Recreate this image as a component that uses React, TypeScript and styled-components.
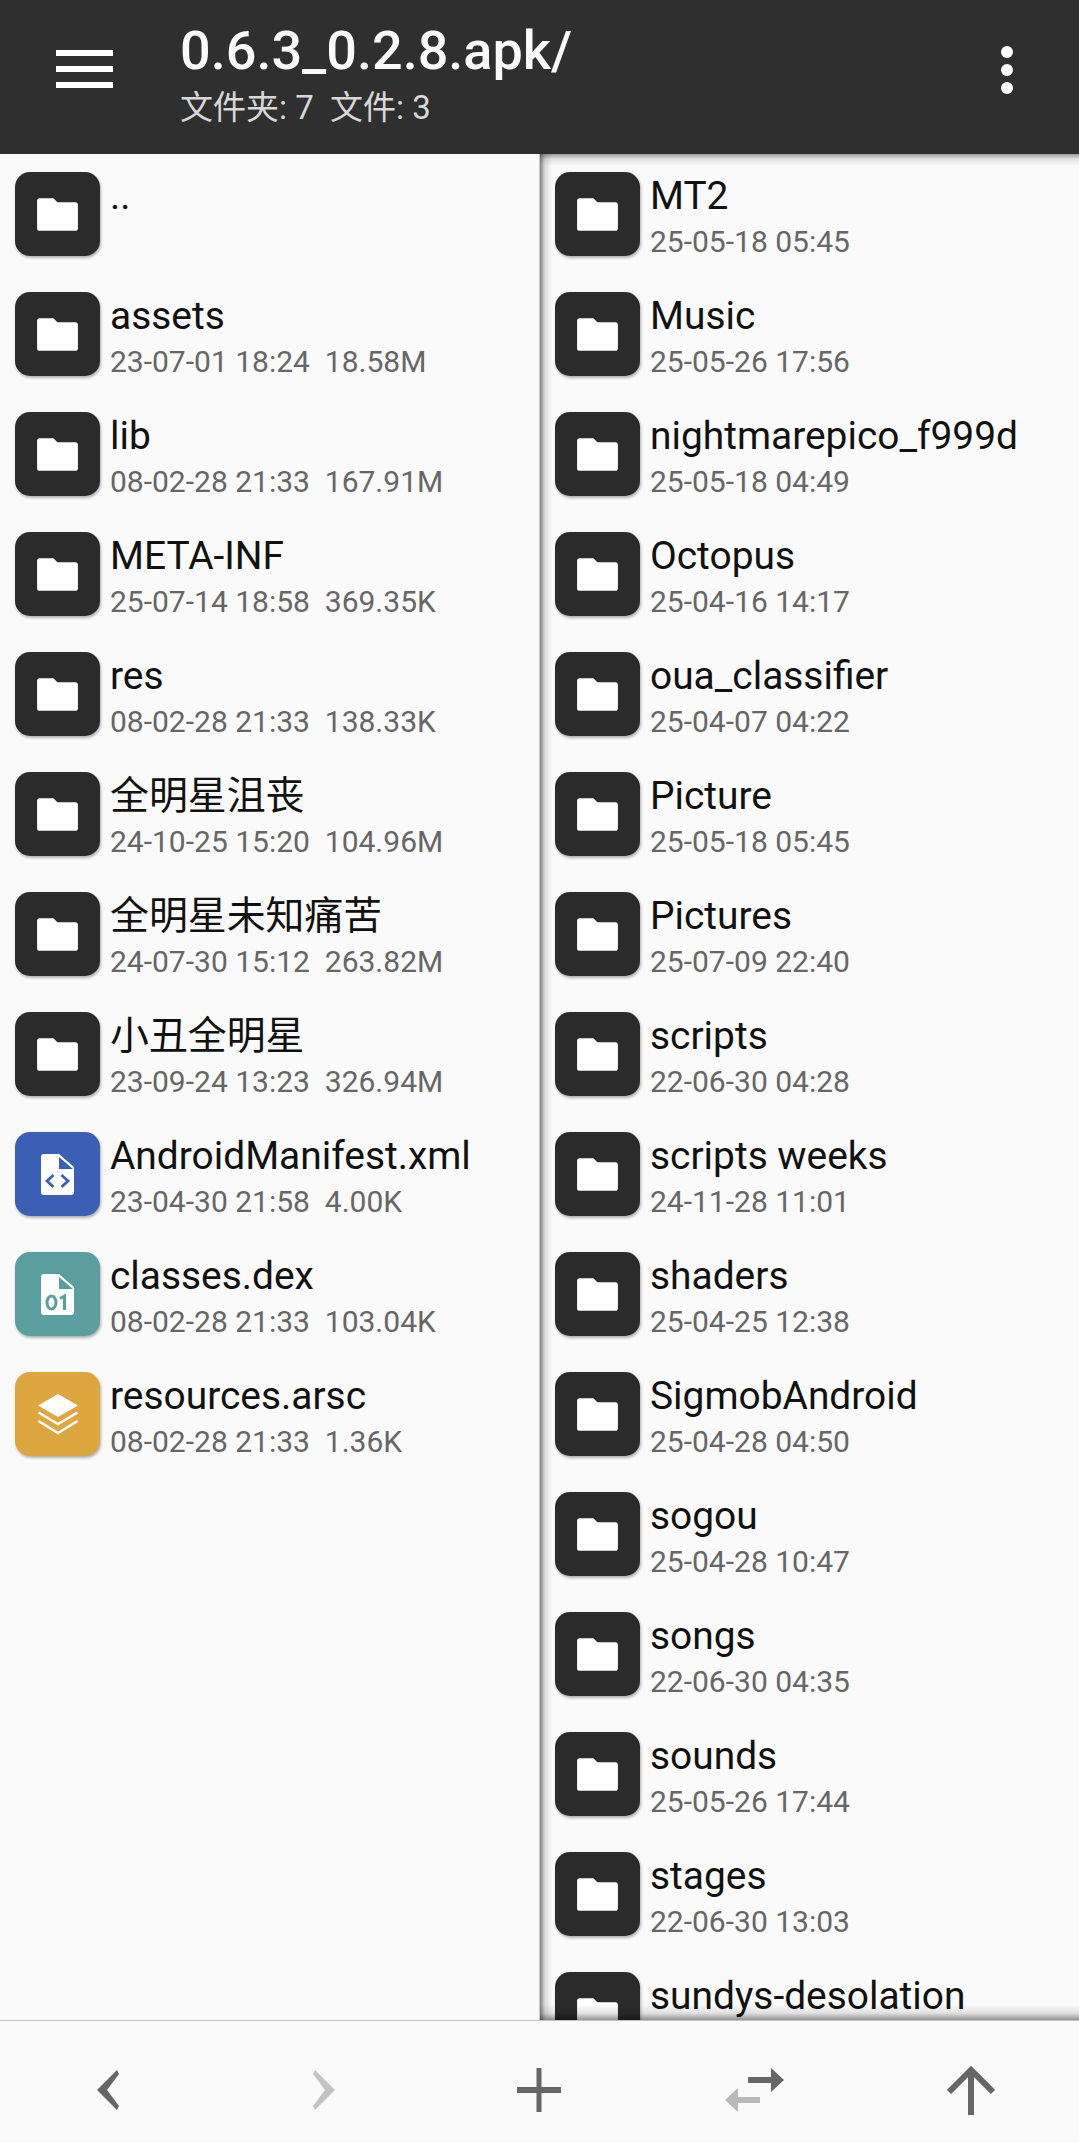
import React from "react";
import styled, { createGlobalStyle } from "styled-components";

const Global = createGlobalStyle`
  html, body { margin: 0; padding: 0; background: #fafafa; }
  body { font-family: Roboto, "Noto Sans CJK SC", sans-serif; }
  * { box-sizing: border-box; }
`;

const Page = styled.div`
  width: 1079px;
  height: 2143px;
  display: flex;
  flex-direction: column;
  overflow: hidden;
  background: #fafafa;
`;

const Header = styled.header`
  flex: 0 0 154px;
  background: #2f2f2f;
  display: flex;
  align-items: flex-start;
  position: relative;
  z-index: 2;
`;

const MenuButton = styled.div`
  flex: 0 0 180px;
  padding: 50px 0 0 56px;
  display: flex;
  flex-direction: column;
  gap: 10px;
`;

const MenuLine = styled.span`
  display: block;
  width: 57px;
  height: 6px;
  background: #fff;
`;

const Titles = styled.div`
  flex: 1;
  padding-top: 19px;
`;

const Title = styled.div`
  font-size: 54px;
  line-height: 64px;
  font-weight: 500;
  color: #fafafa;
`;

const Subtitle = styled.div`
  font-size: 33px;
  line-height: 40px;
  color: #d8d8d8;
  white-space: pre;
  margin-top: 5px;
`;

const MoreButton = styled.div`
  flex: 0 0 144px;
  padding: 46px 0 0 0;
  display: flex;
  flex-direction: column;
  align-items: center;
  gap: 6px;
`;

const Dot = styled.span`
  width: 12px;
  height: 12px;
  border-radius: 50%;
  background: #fff;
`;

const Panes = styled.div`
  flex: 0 0 1866px;
  display: flex;
  overflow: hidden;
`;

const Pane = styled.section<{ $side: "left" | "right" }>`
  position: relative;
  overflow: hidden;
  height: 100%;
  padding-top: 18px;
  flex: 0 0 ${(p) => (p.$side === "left" ? "540px" : "539px")};
  ${(p) =>
    p.$side === "left"
      ? "border-right: 1px solid #c9c9c9;"
      : `
    &::after {
      content: "";
      position: absolute;
      inset: 0;
      pointer-events: none;
      background:
        linear-gradient(to bottom, rgba(0,0,0,.38), rgba(0,0,0,.1) 5px, rgba(0,0,0,0) 12px),
        linear-gradient(to top, rgba(0,0,0,.42), rgba(0,0,0,.1) 7px, rgba(0,0,0,0) 16px),
        linear-gradient(to right, rgba(0,0,0,.48), rgba(0,0,0,.12) 5px, rgba(0,0,0,0) 12px);
    }
  `}
`;

const Row = styled.div`
  height: 120px;
  display: flex;
  align-items: flex-start;
  padding-left: 15px;
`;

const IconTile = styled.div<{ $bg: string }>`
  width: 85px;
  height: 84px;
  flex: 0 0 85px;
  border-radius: 15px;
  background: ${(p) => p.$bg};
  box-shadow: 1px 2px 3px rgba(0, 0, 0, 0.3);
  display: flex;
  align-items: center;
  justify-content: center;
`;

const RowText = styled.div`
  margin-left: 10px;
  min-width: 0;
  padding-top: 1px;
`;

const Name = styled.div`
  font-size: 38.9px;
  line-height: 46px;
  color: #111;
  white-space: nowrap;
`;

const Meta = styled.div`
  font-size: 30px;
  line-height: 36px;
  margin-top: 5px;
  color: #666;
  white-space: pre;
`;

const BottomBar = styled.footer`
  flex: 1;
  display: grid;
  grid-template-columns: repeat(5, 1fr);
  align-items: center;
  justify-items: center;
  background: #fafafa;
  border-top: 1px solid #c4c4c4;
  position: relative;
  z-index: 2;
`;

const BottomButton = styled.div`
  width: 80px;
  height: 80px;
  display: flex;
  align-items: center;
  justify-content: center;
  margin-top: 15px;
`;

const FolderGlyph = () => (
  <svg width="49" height="49" viewBox="0 0 24 24">
    <path
      fill="#fff"
      d="M10 4H3.2C2.5 4 2 4.500 2 5.200v13.600c0 .7.500 1.200 1.200 1.200h17.600c.7 0 1.200-.5 1.200-1.200V7.200C22 6.500 21.500 6 20.800 6H12l-2-2z"
    />
  </svg>
);

const DocGlyph = ({ color, kind }: { color: string; kind: "code" | "bin" }) => (
  <svg width="33" height="41" viewBox="0 0 33 41">
    <path fill="#fff" d="M3 0h15l15 13v25a3 3 0 0 1-3 3H3a3 3 0 0 1-3-3V3a3 3 0 0 1 3-3z" />
    <path fill={color} d="M18 3l14 12H18z" />
    {kind === "code" ? (
      <path
        fill="none"
        stroke={color}
        strokeWidth="2.800"
        d="M12.500 21l-6.500 6 6.500 6M20.500 21l6.500 6-6.500 6"
      />
    ) : (
      <>
        <ellipse cx="10.500" cy="28.500" rx="4.500" ry="6.500" fill="none" stroke={color} strokeWidth="3" />
        <path fill="none" stroke={color} strokeWidth="3" d="M19 24.500l4.500-2.500v14" />
      </>
    )}
  </svg>
);

const LayersGlyph = () => (
  <svg width="42" height="42" viewBox="0 0 42 42">
    <path fill="#fff" d="M21 1l20 11.500-20 11.500L1 12.500z" />
    <path fill="none" stroke="#fff" strokeWidth="2.400" d="M1.500 19.500L21 31l19.500-11.500" />
    <path fill="none" stroke="#fff" strokeWidth="2.400" d="M1.500 28L21 40l19.500-12" />
  </svg>
);

type Item = { name: string; meta?: string; kind?: "xml" | "dex" | "arsc" };

const leftItems: Item[] = [
  { name: ".." },
  { name: "assets", meta: "23-07-01 18:24  18.58M" },
  { name: "lib", meta: "08-02-28 21:33  167.91M" },
  { name: "META-INF", meta: "25-07-14 18:58  369.35K" },
  { name: "res", meta: "08-02-28 21:33  138.33K" },
  { name: "全明星沮丧", meta: "24-10-25 15:20  104.96M" },
  { name: "全明星未知痛苦", meta: "24-07-30 15:12  263.82M" },
  { name: "小丑全明星", meta: "23-09-24 13:23  326.94M" },
  { name: "AndroidManifest.xml", meta: "23-04-30 21:58  4.00K", kind: "xml" },
  { name: "classes.dex", meta: "08-02-28 21:33  103.04K", kind: "dex" },
  { name: "resources.arsc", meta: "08-02-28 21:33  1.36K", kind: "arsc" },
];

const rightItems: Item[] = [
  { name: "MT2", meta: "25-05-18 05:45" },
  { name: "Music", meta: "25-05-26 17:56" },
  { name: "nightmarepico_f999d", meta: "25-05-18 04:49" },
  { name: "Octopus", meta: "25-04-16 14:17" },
  { name: "oua_classifier", meta: "25-04-07 04:22" },
  { name: "Picture", meta: "25-05-18 05:45" },
  { name: "Pictures", meta: "25-07-09 22:40" },
  { name: "scripts", meta: "22-06-30 04:28" },
  { name: "scripts weeks", meta: "24-11-28 11:01" },
  { name: "shaders", meta: "25-04-25 12:38" },
  { name: "SigmobAndroid", meta: "25-04-28 04:50" },
  { name: "sogou", meta: "25-04-28 10:47" },
  { name: "songs", meta: "22-06-30 04:35" },
  { name: "sounds", meta: "25-05-26 17:44" },
  { name: "stages", meta: "22-06-30 13:03" },
  { name: "sundys-desolation" },
];

const tileColor = (kind?: Item["kind"]) =>
  kind === "xml" ? "#3b5fb4" : kind === "dex" ? "#5a9ea0" : kind === "arsc" ? "#dea63e" : "#2b2b2b";

const TileGlyph = ({ kind }: { kind?: Item["kind"] }) => {
  if (kind === "xml") return <DocGlyph color={tileColor(kind)} kind="code" />;
  if (kind === "dex") return <DocGlyph color={tileColor(kind)} kind="bin" />;
  if (kind === "arsc") return <LayersGlyph />;
  return <FolderGlyph />;
};

const FileRow = ({ item }: { item: Item }) => (
  <Row>
    <IconTile $bg={tileColor(item.kind)}>
      <TileGlyph kind={item.kind} />
    </IconTile>
    <RowText>
      <Name>{item.name}</Name>
      {item.meta && <Meta>{item.meta}</Meta>}
    </RowText>
  </Row>
);

export default function App() {
  return (
    <Page>
      <Global />
      <Header>
        <MenuButton>
          <MenuLine />
          <MenuLine />
          <MenuLine />
        </MenuButton>
        <Titles>
          <Title>0.6.3_0.2.8.apk/</Title>
          <Subtitle>文件夹: 7  文件: 3</Subtitle>
        </Titles>
        <MoreButton>
          <Dot />
          <Dot />
          <Dot />
        </MoreButton>
      </Header>
      <Panes>
        <Pane $side="left">
          {leftItems.map((it) => (
            <FileRow key={it.name} item={it} />
          ))}
        </Pane>
        <Pane $side="right">
          {rightItems.map((it) => (
            <FileRow key={it.name} item={it} />
          ))}
        </Pane>
      </Panes>
      <BottomBar>
        <BottomButton>
          <svg width="22" height="40" viewBox="0 0 22 40">
            <path fill="#666" d="M20 0l2 4-12 16 12 16-2 4L0 20z" />
          </svg>
        </BottomButton>
        <BottomButton>
          <svg width="22" height="40" viewBox="0 0 22 40">
            <path fill="#c4c4c4" d="M2 0L0 4l12 16L0 36l2 4 20-20z" />
          </svg>
        </BottomButton>
        <BottomButton>
          <svg width="44" height="44" viewBox="0 0 44 44">
            <path fill="#666" d="M19.500 0h5v19H44v6H24.500v19h-5V25H0v-6h19.500z" />
          </svg>
        </BottomButton>
        <BottomButton>
          <svg width="60" height="44" viewBox="0 0 60 44">
            <path fill="#666" d="M46 0l13 12-13 12v-9H23V9h23z" />
            <path fill="#b9b9b9" d="M13 20L0 32l13 12v-9h22v-6H13z" />
          </svg>
        </BottomButton>
        <BottomButton>
          <svg width="48" height="50" viewBox="0 0 48 50">
            <path fill="none" stroke="#666" strokeWidth="6" d="M2 27L24 5l22 22M24 5v45" />
          </svg>
        </BottomButton>
      </BottomBar>
    </Page>
  );
}
